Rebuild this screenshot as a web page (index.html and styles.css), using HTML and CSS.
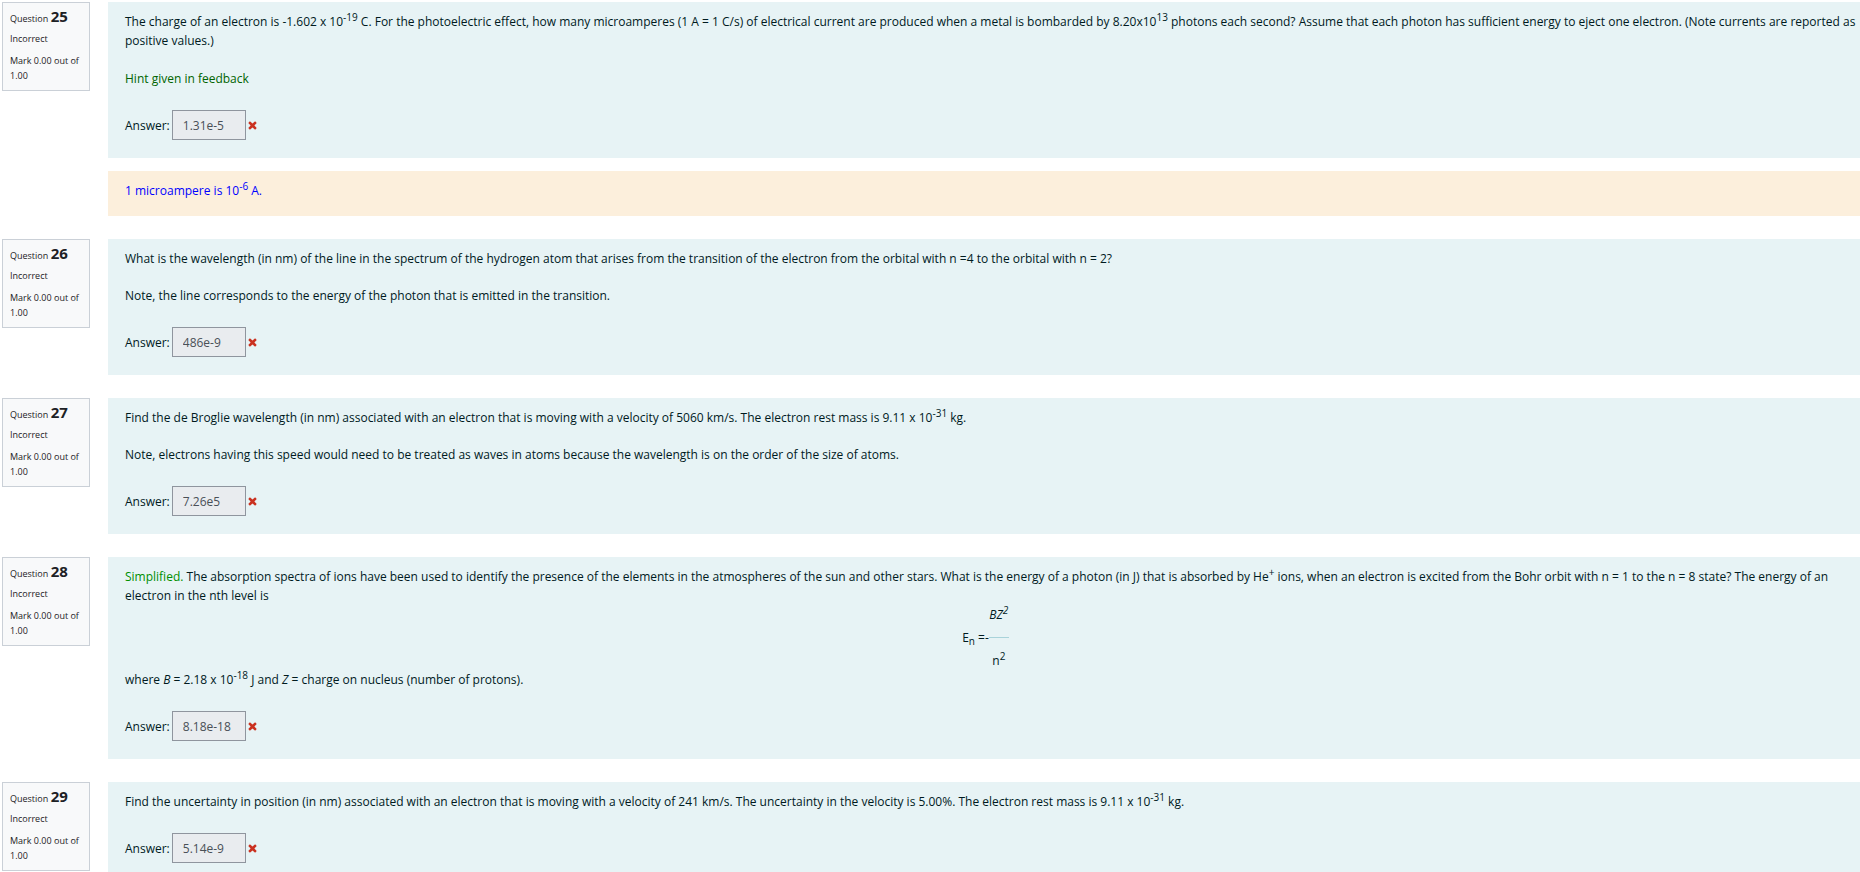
FILE: index.html
```html
<!DOCTYPE html>
<html lang="en">
<head>
    <meta charset="UTF-8">
    <meta name="viewport" content="width=device-width, initial-scale=1.0">
    <title>Quiz Review</title>
    <link rel="stylesheet" href="styles.css">
</head>
<body>
    <!-- Shared icon for wrong answers -->
    <svg class="icon-defs" aria-hidden="true">
        <symbol id="cross" viewBox="0 0 10 10">
            <path d="M2.1 0.4 L5 2.9 L7.9 0.4 L9.7 2.1 L7.1 5 L9.7 7.9 L7.9 9.6 L5 7.1 L2.1 9.6 L0.3 7.9 L2.9 5 L0.3 2.1 Z"/>
        </symbol>
    </svg>

    <main>
        <!-- Question 25 -->
        <section class="question">
            <div class="info">
                <h3>Question <span class="number">25</span></h3>
                <div class="state">Incorrect</div>
                <div class="grade">Mark 0.00 out of 1.00</div>
            </div>
            <div class="content">
                <div class="formulation">
                    <p>The charge of an electron is -1.602 x 10<sup>-19</sup> C. For the photoelectric effect, how many microamperes (1 A = 1 C/s) of electrical current are produced when a metal is bombarded by 8.20x10<sup>13</sup> photons each second? Assume that each photon has sufficient energy to eject one electron. (Note currents are reported as positive values.)</p>
                    <p class="hint">Hint given in feedback</p>
                    <div class="answer">
                        <label for="answer25">Answer:</label>
                        <input type="text" id="answer25" value="1.31e-5" readonly>
                        <svg class="icon"><use href="#cross"/></svg>
                    </div>
                </div>
                <div class="feedback">
                    <p>1 microampere is 10<sup>-6</sup> A.</p>
                </div>
            </div>
        </section>

        <!-- Question 26 -->
        <section class="question">
            <div class="info">
                <h3>Question <span class="number">26</span></h3>
                <div class="state">Incorrect</div>
                <div class="grade">Mark 0.00 out of 1.00</div>
            </div>
            <div class="content">
                <div class="formulation">
                    <p>What is the wavelength (in nm) of the line in the spectrum of the hydrogen atom that arises from the transition of the electron from the orbital with n =4 to the orbital with n = 2?</p>
                    <p>Note, the line corresponds to the energy of the photon that is emitted in the transition.</p>
                    <div class="answer">
                        <label for="answer26">Answer:</label>
                        <input type="text" id="answer26" value="486e-9" readonly>
                        <svg class="icon"><use href="#cross"/></svg>
                    </div>
                </div>
            </div>
        </section>

        <!-- Question 27 -->
        <section class="question">
            <div class="info">
                <h3>Question <span class="number">27</span></h3>
                <div class="state">Incorrect</div>
                <div class="grade">Mark 0.00 out of 1.00</div>
            </div>
            <div class="content">
                <div class="formulation">
                    <p>Find the de Broglie wavelength (in nm) associated with an electron that is moving with a velocity of 5060 km/s. The electron rest mass is 9.11 x 10<sup>-31</sup> kg.</p>
                    <p>Note, electrons having this speed would need to be treated as waves in atoms because the wavelength is on the order of the size of atoms.</p>
                    <div class="answer">
                        <label for="answer27">Answer:</label>
                        <input type="text" id="answer27" value="7.26e5" readonly>
                        <svg class="icon"><use href="#cross"/></svg>
                    </div>
                </div>
            </div>
        </section>

        <!-- Question 28 -->
        <section class="question">
            <div class="info">
                <h3>Question <span class="number">28</span></h3>
                <div class="state">Incorrect</div>
                <div class="grade">Mark 0.00 out of 1.00</div>
            </div>
            <div class="content">
                <div class="formulation">
                    <div class="text">
                        <span class="simplified">Simplified.</span> The absorption spectra of ions have been used to identify the presence of the elements in the atmospheres of the sun and other stars. What is the energy of a photon (in J) that is absorbed by He<sup>+</sup> ions, when an electron is excited from the Bohr orbit with n = 1 to the n = 8 state? The energy of an electron in the nth level is
                        <div class="formula">
                            <span>E<sub>n</sub> =-</span>
                            <div class="fraction">
                                <i>BZ<sup>2</sup></i>
                                <hr>
                                <span>n<sup>2</sup></span>
                            </div>
                        </div>
                        where <i>B</i> = 2.18 x 10<sup>-18</sup> J and <i>Z</i> = charge on nucleus (number of protons).
                    </div>
                    <div class="answer">
                        <label for="answer28">Answer:</label>
                        <input type="text" id="answer28" value="8.18e-18" readonly>
                        <svg class="icon"><use href="#cross"/></svg>
                    </div>
                </div>
            </div>
        </section>

        <!-- Question 29 -->
        <section class="question">
            <div class="info">
                <h3>Question <span class="number">29</span></h3>
                <div class="state">Incorrect</div>
                <div class="grade">Mark 0.00 out of 1.00</div>
            </div>
            <div class="content">
                <div class="formulation">
                    <p>Find the uncertainty in position (in nm) associated with an electron that is moving with a velocity of 241 km/s. The uncertainty in the velocity is 5.00%. The electron rest mass is 9.11 x 10<sup>-31</sup> kg.</p>
                    <div class="answer">
                        <label for="answer29">Answer:</label>
                        <input type="text" id="answer29" value="5.14e-9" readonly>
                        <svg class="icon"><use href="#cross"/></svg>
                    </div>
                </div>
            </div>
        </section>
    </main>
</body>
</html>
```

FILE: styles.css
```css
* {
    box-sizing: border-box;
}
html {
    overflow: hidden;
}
body {
    margin: 0;
    padding: 2px 0 0 2px;
    background-color: #fff;
    color: #001a1e;
    font-family: "Segoe UI", "Open Sans", sans-serif;
    font-size: 12px;
    line-height: 19px;
}
.icon-defs {
    display: none;
}
.question {
    display: flex;
    align-items: flex-start;
    gap: 18px;
    margin-bottom: 23px;
}
/* Question number, state and mark */
.info {
    flex: none;
    width: 88px;
    padding: 6px 6px 7px 7px;
    border: 1px solid #cad0d7;
    background-color: #f8f9fa;
    color: #1d2125;
    font-size: 9px;
    line-height: 15px;
}
.info h3 {
    margin: 0;
    font-size: 9px;
    font-weight: normal;
    line-height: 15px;
}
.number {
    font-size: 15px;
    font-weight: bold;
}
.state {
    margin-top: 5px;
}
.grade {
    margin-top: 7px;
}
.content {
    flex: 1;
}
.formulation {
    padding: 10px 4px 18px 17px;
    background-color: #e7f3f5;
}
p {
    margin: 0 0 18px;
}
sup, sub {
    position: relative;
    font-size: 10px;
    line-height: 0;
    vertical-align: baseline;
}
sup {
    top: -0.5em;
}
sub {
    bottom: -0.25em;
}
.hint {
    margin-top: 19px;
    color: #006400;
}
.simplified {
    color: #008f00;
}
.answer {
    display: flex;
    align-items: center;
    margin-top: 22px;
}
input {
    width: 74px;
    height: 30px;
    margin: 0 2px;
    padding: 0 10px;
    border: 1px solid #8f959e;
    background-color: #e9ecef;
    color: #495057;
    font-family: inherit;
    font-size: 12px;
}
.icon {
    width: 9px;
    height: 9px;
    fill: #ca3120;
}
/* Energy level formula */
.formula {
    display: flex;
    justify-content: center;
    align-items: center;
    padding-right: 10px;
}
.fraction {
    text-align: center;
}
.fraction hr {
    width: 20px;
    margin: 13px 0;
    border: 0;
    border-top: 1px solid #a9d3da;
}
.feedback {
    margin-top: 13px;
    padding: 10px 17px 16px;
    background-color: #fcefdc;
    color: #00f;
}
.feedback p {
    margin: 0;
}
```
